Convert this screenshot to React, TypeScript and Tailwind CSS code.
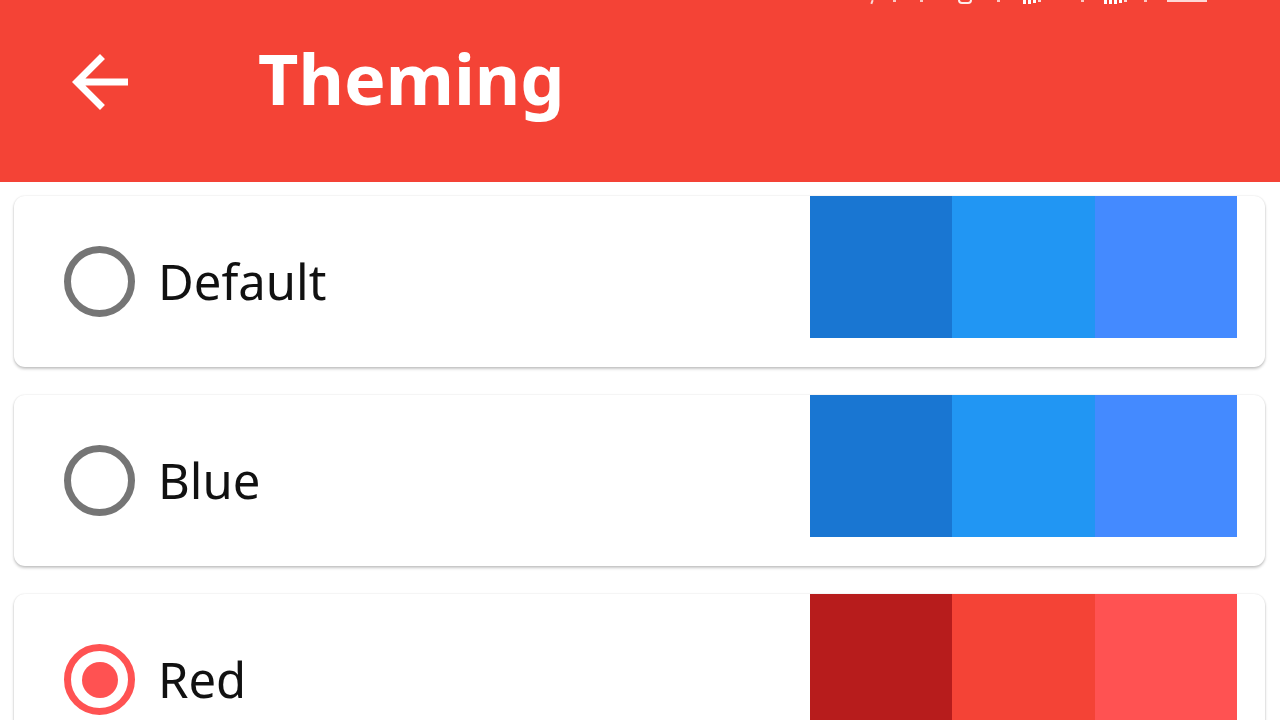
import React, { useState } from 'react';

interface ThemeOption {
  id: string;
  label: string;
  colors: [string, string, string];
}

const themes: ThemeOption[] = [
  { id: 'default', label: 'Default', colors: ['bg-[#1976D2]', 'bg-[#2196F3]', 'bg-[#448AFF]'] },
  { id: 'blue', label: 'Blue', colors: ['bg-[#1976D2]', 'bg-[#2196F3]', 'bg-[#448AFF]'] },
  { id: 'red', label: 'Red', colors: ['bg-[#B71C1C]', 'bg-[#F44336]', 'bg-[#FF5252]'] }
];

// Tops of the status bar icons, cut off by the screenshot edge
const StatusBar: React.FC = () => (
  <div className="flex h-[6px] items-start">
    <div className="ml-[871px] h-[4px] w-[2px] rotate-[20deg] bg-white/80" />
    <div className="ml-[20px] h-[2px] w-[3px] bg-white/70" />
    <div className="ml-[24px] h-[2px] w-[3px] bg-white/70" />
    <div className="ml-[35px] h-[4px] w-[14px] rounded-b-full border-x-2 border-b-2 border-white/90" />
    <div className="ml-[25px] h-[2px] w-[3px] bg-white/70" />
    <div className="ml-[23px] flex gap-[2px]">
      <div className="h-[4px] w-[3px] bg-white" />
      <div className="h-[4px] w-[3px] bg-white" />
      <div className="h-[3px] w-[3px] bg-white" />
      <div className="h-[2px] w-[3px] bg-white/80" />
    </div>
    <div className="ml-[40px] h-[2px] w-[3px] bg-white/70" />
    <div className="ml-[20px] flex gap-[2px]">
      <div className="h-[4px] w-[3px] bg-white" />
      <div className="h-[4px] w-[3px] bg-white" />
      <div className="h-[4px] w-[3px] bg-white" />
      <div className="h-[3px] w-[3px] bg-white" />
      <div className="h-[2px] w-[3px] bg-white/80" />
    </div>
    <div className="ml-[17px] h-[2px] w-[3px] bg-white/70" />
    <div className="ml-[20px] h-[2px] w-[40px] bg-white/80" />
  </div>
);

const Radio: React.FC<{ checked: boolean }> = ({ checked }) => (
  <div
    className={
      checked
        ? 'flex h-[71px] w-[71px] shrink-0 items-center justify-center rounded-full border-[7px] border-[#FF5252]'
        : 'flex h-[71px] w-[71px] shrink-0 items-center justify-center rounded-full border-[7px] border-[#757575]'
    }>
    {checked && <div className="h-[36px] w-[36px] rounded-full bg-[#FF5252]" />}
  </div>
);

export default function App() {
  const [selected, setSelected] = useState('red');

  return (
    <div className="h-[720px] w-[1280px] overflow-hidden bg-white font-['Noto_Sans',sans-serif]">
      <header className="flex h-[182px] flex-col bg-[#F44336]">
        <StatusBar />
        <div className="flex h-[156px] items-start">
          <button className="ml-[58px] mt-[34px] flex h-[84px] w-[84px] items-center justify-center text-white">
            <svg viewBox="0 0 24 24" width="84" height="84" fill="currentColor">
              <path d="M20 11H7.83l5.59-5.59L12 4l-8 8 8 8 1.41-1.41L7.83 13H20v-2z" />
            </svg>
          </button>
          <h1 className="ml-[116px] mt-[37px] text-[70px] font-bold leading-none text-white">Theming</h1>
        </div>
      </header>

      <div className="flex flex-col gap-[28px] pl-[14px] pr-[15px] pt-[14px]">
        {themes.map((theme) => (
          <div
            key={theme.id}
            onClick={() => setSelected(theme.id)}
            className="flex h-[171px] shrink-0 rounded-[11px] bg-white shadow-[0_2px_3px_rgba(0,0,0,0.22),0_0_2px_rgba(0,0,0,0.12)]">
            <div className="flex flex-1 items-center gap-[23px] pl-[50px]">
              <Radio checked={selected === theme.id} />
              <span className="text-[49px] leading-none text-[#111]">{theme.label}</span>
            </div>
            <div className="mr-[28px] flex h-[142px] w-[427px] self-start">
              {theme.colors.map((c, i) => (
                <div key={i} className={`${c} h-full flex-1`} />
              ))}
            </div>
          </div>
        ))}
      </div>
    </div>
  );
}
